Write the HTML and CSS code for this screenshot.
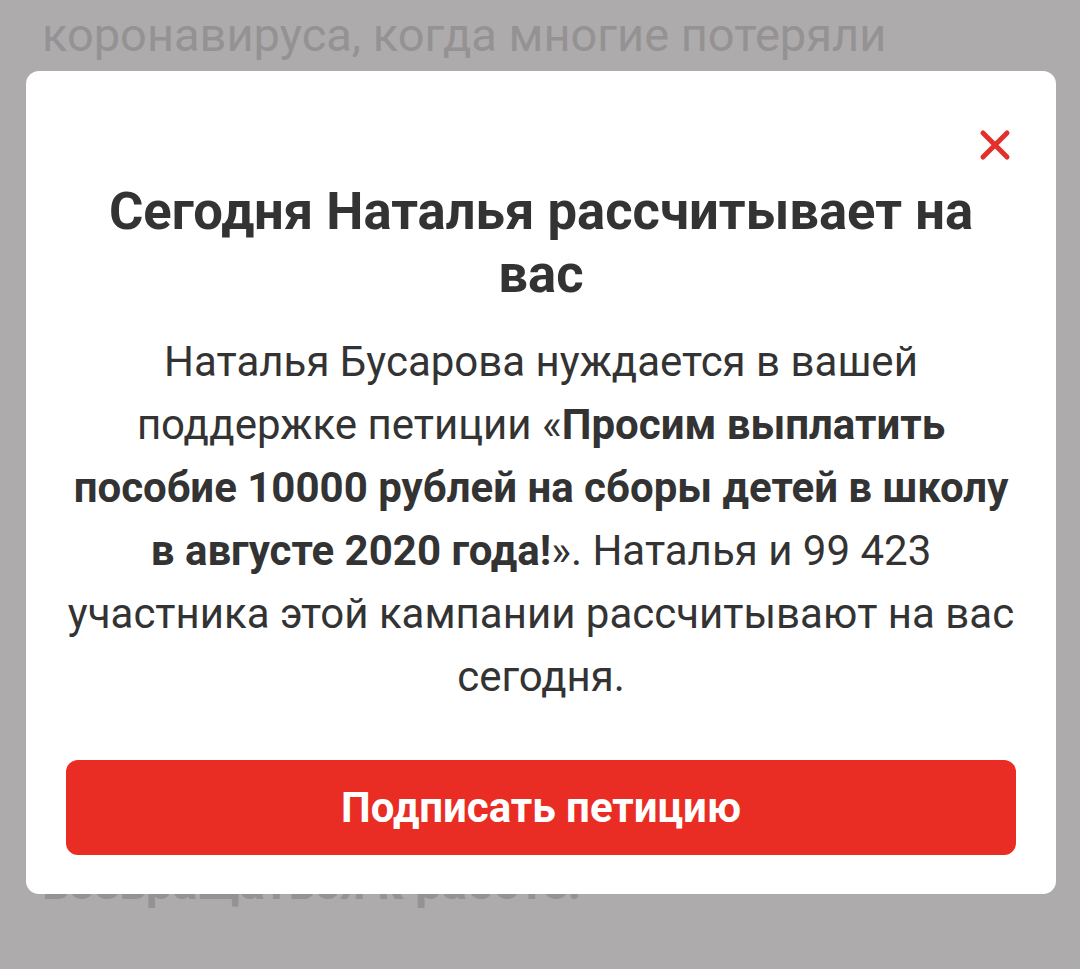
FILE: index.html
```html
<!DOCTYPE html>
<html lang="ru">
<head>
<meta charset="utf-8">
<link rel="stylesheet" href="styles.css">
</head>
<body>
<div class="page">
  <p class="bg-text">коронавируса, когда многие потеряли</p>
  <p class="bg-text bg-bold">возвращаться к работе.</p>
</div>
<div class="overlay">
  <div class="modal">
    <div class="close-row">
      <svg class="close" viewBox="0 0 32 32" width="32" height="32"><path d="M4 4 L28 28 M28 4 L4 28" stroke="#e2302a" stroke-width="5" stroke-linecap="round"/></svg>
    </div>
    <h1 class="title">Сегодня Наталья рассчитывает на<br>вас</h1>
    <p class="body">Наталья Бусарова нуждается в вашей<br>поддержке петиции «<b>Просим выплатить<br>пособие 10000 рублей на сборы детей в школу<br>в августе 2020 года!</b>». Наталья и 99 423<br>участника этой кампании рассчитывают на вас<br>сегодня.</p>
    <button class="cta">Подписать петицию</button>
  </div>
</div>
</body>
</html>
```

FILE: styles.css
```css
html, body {
  margin: 0;
  padding: 0;
  width: 1080px;
  height: 969px;
  overflow: hidden;
  background: #adabac;
  font-family: Roboto, "Liberation Sans", sans-serif;
}
.page {
  position: relative;
  padding: 6px 42px 0;
}
.bg-text {
  margin: 0;
  font-size: 47px;
  line-height: 58px;
  color: #959294;
}
.bg-bold {
  font-weight: 700;
  margin-top: 790px;
}
.overlay {
  position: absolute;
  inset: 0;
  padding: 71px 24px 0 26px;
}
.modal {
  background: #fff;
  border-radius: 13px;
  height: 823px;
  box-sizing: border-box;
  padding: 58px 20px 0;
  display: flex;
  flex-direction: column;
  align-items: center;
}
.close-row {
  align-self: stretch;
  display: flex;
  justify-content: flex-end;
  padding-right: 25px;
  height: 32px;
}
.close {
  display: block;
}
.title {
  margin: 19px 0 0;
  font-size: 52.6px;
  line-height: 63px;
  font-weight: 700;
  color: #333;
  text-align: center;
  white-space: nowrap;
}
.body {
  margin: 24px 0 0;
  font-size: 42px;
  line-height: 63px;
  color: #333;
  text-align: center;
  white-space: nowrap;
}
.body b {
  font-weight: 700;
}
.cta {
  margin-top: 52px;
  width: 950px;
  height: 95px;
  flex-shrink: 0;
  border: 0;
  border-radius: 12px;
  background: #ea2d24;
  color: #fff;
  font-family: Roboto, "Liberation Sans", sans-serif;
  font-weight: 700;
  font-size: 42px;
}
```
